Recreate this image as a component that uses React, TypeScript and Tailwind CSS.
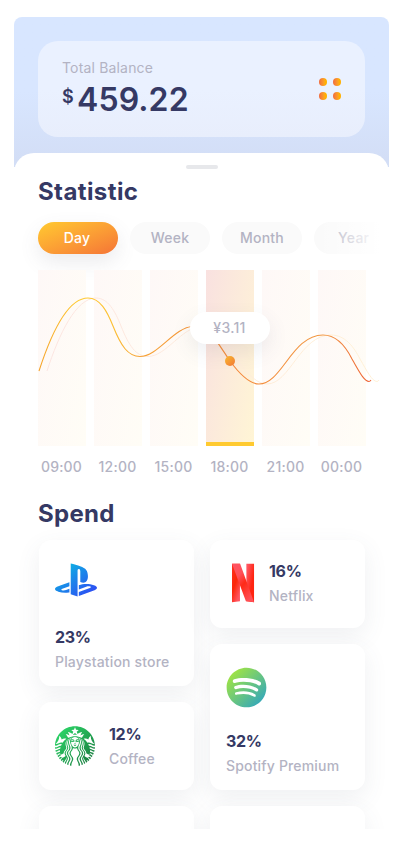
import type { ReactNode } from 'react';
import { SiPlaystation, SiStarbucks } from 'react-icons/si';
import { FaSpotify } from 'react-icons/fa';

const hours = ['09:00', '12:00', '15:00', '18:00', '21:00', '00:00'];

const curve =
  'M1 101 C13 64 30 28 50 28 C62 28 69 41 75 56 C83 76 90 86.5 102 86.5 C120 86.5 136 57 155 56.5 C171 55 179 72 192 91 C203 106 212 114 221 114 C244 114 254 65 285 65 C299 65 308 77 314 89 C321 101 326 111.5 331 111.5 Q332 111.5 333 110';

function Gradients() {
  return (
    <svg width="0" height="0" className="absolute">
      <defs>
        <linearGradient id="ps" x1="0" y1="0" x2="1" y2="1">
          <stop offset="0.15" stopColor="#0db2e2" />
          <stop offset="0.85" stopColor="#2b53f2" />
        </linearGradient>
        <linearGradient id="coffee" x1="0" y1="0" x2="1" y2="1">
          <stop offset="0" stopColor="#2fe06d" />
          <stop offset="1" stopColor="#17733b" />
        </linearGradient>
        <linearGradient id="music" x1="0" y1="0" x2="1" y2="1">
          <stop offset="0.1" stopColor="#a4e63f" />
          <stop offset="0.95" stopColor="#2ba3c4" />
        </linearGradient>
      </defs>
    </svg>
  );
}

function NetflixLogo() {
  return (
    <svg width="24" height="40" viewBox="0 0 24 40">
      <defs>
        <linearGradient id="nl" x1="0" y1="0" x2="0.6" y2="1">
          <stop offset="0" stopColor="#ff3020" />
          <stop offset="0.55" stopColor="#fb2608" />
          <stop offset="1" stopColor="#ff5560" />
        </linearGradient>
        <linearGradient id="nr" x1="0.2" y1="0" x2="1" y2="0.7">
          <stop offset="0" stopColor="#ff5560" />
          <stop offset="0.7" stopColor="#ff2410" />
        </linearGradient>
        <linearGradient id="nd" x1="0" y1="0" x2="0.7" y2="1">
          <stop offset="0" stopColor="#ff5563" />
          <stop offset="0.35" stopColor="#ff505a" />
          <stop offset="0.6" stopColor="#ff2a17" />
          <stop offset="1" stopColor="#ff5058" />
        </linearGradient>
      </defs>
      <path d="M0 0H8.3V39L0 40Z" fill="url(#nl)" />
      <path d="M15 0H23V40L15 39Z" fill="url(#nr)" />
      <path d="M0 0H8.5L23 40Q19 39.2 14.5 39Z" fill="url(#nd)" />
    </svg>
  );
}

type CardProps = { icon: ReactNode; value: string; name: string; tall?: boolean; textClass?: string };

function Card({ icon, value, name, tall = false, textClass = '-mt-[2px]' }: CardProps) {
  return (
    <div
      className={
        'w-[155px] rounded-xl bg-white px-4 shadow-[0_8px_24px_rgba(75,85,115,0.09)] ' +
        (tall ? 'flex h-[146px] flex-col pt-6' : 'flex h-[88px] items-start gap-[14px] pt-6')
      }
    >
      <div className="flex h-10 shrink-0 items-center">{icon}</div>
      <div className={tall ? 'mt-[23px]' : textClass}>
        <p className="text-base leading-5 font-bold tracking-[-0.3px] text-[#353964]">{value}</p>
        <p className="mt-[5px] text-sm leading-5 font-medium tracking-[0.17px] whitespace-nowrap text-[#b3b3c3]">{name}</p>
      </div>
    </div>
  );
}

function Chart() {
  return (
    <div className="relative mt-4 h-[176px] w-[334px]">
      <div className="flex gap-2">
        {hours.map((h, i) => (
          <div
            key={h}
            className={
              i === 3
                ? 'h-[176px] w-12 border-b-4 border-[#ffca30] bg-linear-100 from-[#f9e1e0] to-[#fff5d5]'
                : 'h-[176px] w-12 bg-linear-100 from-[#fef8f7] to-[#fffdf6]'
            }
          />
        ))}
      </div>
      <svg className="absolute top-0 left-0" width="344" height="176" fill="none">
        <defs>
          <linearGradient id="mainLine" gradientUnits="userSpaceOnUse" x1="0" y1="0" x2="333" y2="0">
            <stop offset="0" stopColor="#f5a22b" />
            <stop offset="0.12" stopColor="#ffca30" />
            <stop offset="0.22" stopColor="#fcc032" />
            <stop offset="0.3" stopColor="#f6a436" />
            <stop offset="0.6" stopColor="#f4883a" />
            <stop offset="0.85" stopColor="#f29a45" />
            <stop offset="1" stopColor="#ee6235" />
          </linearGradient>
          <linearGradient id="ghost" gradientUnits="userSpaceOnUse" x1="0" y1="0" x2="340" y2="0">
            <stop offset="0" stopColor="#fce5e1" />
            <stop offset="1" stopColor="#fff1d6" />
          </linearGradient>
          <linearGradient id="dot" x1="0.1" y1="0" x2="0.9" y2="1">
            <stop offset="0" stopColor="#fdba2f" />
            <stop offset="1" stopColor="#f47a35" />
          </linearGradient>
        </defs>
        <path d={curve} transform="translate(8 0)" stroke="url(#ghost)" />
        <path d={curve} stroke="url(#mainLine)" strokeWidth="1.1" />
        <circle cx="192" cy="91" r="5" fill="url(#dot)" />
      </svg>
      <div className="absolute top-[42px] left-[152px] h-8 w-20 rounded-full bg-white pr-px text-center text-sm leading-8 font-medium tracking-[0.3px] text-[#b3b3c3] shadow-[0_8px_20px_rgba(75,85,115,0.10)]">
        ¥3.11
      </div>
    </div>
  );
}

export default function App() {
  return (
    <div className="h-[847px] w-[402px] overflow-hidden bg-white pt-[17px] font-['Inter',sans-serif]">
      <Gradients />
      <div className="mr-[13px] ml-[14px] h-[812px] overflow-hidden rounded-t-lg bg-white">
        <header className="h-[150px] bg-linear-to-b from-[#d8e6ff] from-50% to-[#d3def6] to-95% px-6 pt-6">
          <div className="flex h-24 w-[327px] items-center justify-between rounded-[20px] bg-linear-to-b from-[#eaf1ff] from-50% to-[#e8eefc] px-6">
            <div className="-mt-[1px]">
              <p className="text-sm leading-5 tracking-[0.17px] text-[#b3b3c3]">Total Balance</p>
              <div className="mt-[2px] flex text-[#353964]">
                <span className="mt-[5px] w-[15px] text-lg leading-6 font-semibold">$</span>
                <span className="text-[32px] leading-10 font-semibold tracking-[0.1px]">459.22</span>
              </div>
            </div>
            <div className="grid grid-cols-2 gap-[6px]">
              {[0, 1, 2, 3].map((n) => (
                <i key={n} className="size-2 rounded-full bg-linear-to-r from-[#f06a3e] to-[#ffb000] to-80%" />
              ))}
            </div>
          </div>
        </header>
        <main className="-mt-[14px] h-[676px] rounded-t-[20px] bg-white px-6">
          <div className="flex h-6 justify-center pt-3">
            <div className="h-1 w-8 rounded-full bg-[#e7e8eb]" />
          </div>
          <h2 className="text-2xl leading-[30px] font-bold tracking-[0.4px] text-[#353964]">Statistic</h2>
          <div className="relative mt-[15px] flex w-[342px] gap-3 text-center text-sm leading-8 font-medium tracking-[0.25px] text-[#b3b3c3]">
            <div className="h-8 w-20 shrink-0 rounded-full bg-linear-to-br from-[#ffca30] to-[#f47336] leading-[31px] text-white shadow-[0_8px_20px_rgba(90,90,110,0.12)]">
              <span className="relative -left-px">Day</span>
            </div>
            <div className="h-8 w-20 shrink-0 rounded-full bg-[#fafafa]">Week</div>
            <div className="h-8 w-20 shrink-0 rounded-full bg-[#fafafa]">Month</div>
            <div className="h-8 w-[66px] shrink-0 rounded-l-full bg-[#fafafa] pl-6 text-left">Year</div>
            <div className="absolute top-0 right-0 h-8 w-[62px] bg-linear-to-r from-white/0 to-white" />
          </div>
          <Chart />
          <div className="mt-[11px] flex w-[336px] text-sm leading-5 font-medium tracking-[0.2px] text-[#b3b3c3]">
            {hours.map((h) => (
              <span key={h} className="w-14 pr-[9px] text-center whitespace-nowrap">
                {h}
              </span>
            ))}
          </div>
          <h2 className="mt-[22px] text-2xl leading-[30px] font-bold tracking-[0.3px] text-[#353964]">Spend</h2>
          <div className="mt-[11px] flex items-start gap-4 pl-px">
            <div className="flex flex-col gap-4">
              <Card
                tall
                icon={<SiPlaystation size={42} fill="url(#ps)" className="-mt-2" />}
                value="23%"
                name="Playstation store"
              />
              <Card icon={<SiStarbucks size={40} fill="url(#coffee)" />} value="12%" name="Coffee" />
              <div className="h-[88px] w-[155px] rounded-xl bg-white shadow-[0_8px_24px_rgba(75,85,115,0.09)]" />
            </div>
            <div className="flex flex-col gap-4">
              <Card
                icon={
                  <div className="-mt-[2px] flex w-[29px] pl-[6px]">
                    <NetflixLogo />
                  </div>
                }
                value="16%"
                name="Netflix"
                textClass="-mt-[3px]"
              />
              <Card
                tall
                icon={<FaSpotify size={41} fill="url(#music)" className="-mt-px -ml-[0.5px]" />}
                value="32%"
                name="Spotify Premium"
              />
              <div className="h-[88px] w-[155px] rounded-xl bg-white shadow-[0_8px_24px_rgba(75,85,115,0.09)]" />
            </div>
          </div>
        </main>
      </div>
    </div>
  );
}
